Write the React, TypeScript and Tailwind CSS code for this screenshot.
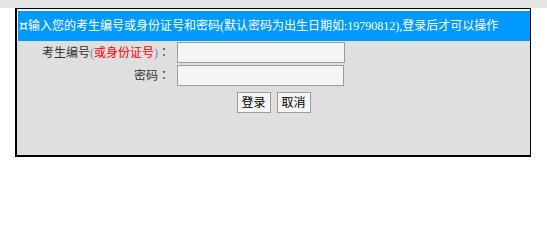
export default function App() {
  return (
    <div className="w-[547px] h-[204px] bg-white font-['Liberation_Serif','Noto_Sans_CJK_SC',serif] text-[12px]">
      <div className="h-[8px] bg-[#e6e6e6]" />
      <div className="ml-[15px] w-[516px] h-[149px] border-t border-r border-l-2 border-b-2 border-black bg-[#dfdfdf] flex flex-col">
        {/* header bar */}
        <div className="border-t-2 border-l border-[#f2f2f2]">
          <div className="h-[30px] bg-[#0099ff] text-white flex items-center pl-[1px] whitespace-nowrap">
            <span className="text-[14px] leading-none font-['DejaVu_Sans',sans-serif]">¤</span>
            输入您的考生编号或身份证号和密码(默认密码为出生日期如:19790812),登录后才可以操作
          </div>
        </div>

        <div className="grid grid-cols-[153px_auto] gap-x-[7px] gap-y-[2px] mt-[1px] items-center">
          <label className="text-right text-[#333] leading-none">
            考生编号<span className="text-[#7a8aa8]">(</span>
            <span className="text-[#ff0000]">或身份证号</span>
            <span className="text-[#7a8aa8]">)</span>
            <span className="font-['Noto_Sans_CJK_JP',sans-serif]">：</span>
          </label>
          <input
            type="text"
            className="w-[168px] h-[21px] border border-[#9c9c9c] bg-[#f5f5f5] outline-none"
          />
          <label className="text-right text-[#333] leading-none">
            密码<span className="font-['Noto_Sans_CJK_JP',sans-serif]">：</span>
          </label>
          <input
            type="password"
            className="w-[167px] h-[21px] border border-[#9c9c9c] bg-[#f5f5f5] outline-none"
          />
        </div>

        <div className="flex justify-center gap-[6px] mt-[6px]">
          <button className="w-[34px] h-[21px] border border-[#9c9c9c] bg-[#f5f5f5] text-black text-[12px] leading-none">
            登录
          </button>
          <button className="w-[34px] h-[21px] border border-[#9c9c9c] bg-[#f5f5f5] text-black text-[12px] leading-none">
            取消
          </button>
        </div>
      </div>
    </div>
  )
}
